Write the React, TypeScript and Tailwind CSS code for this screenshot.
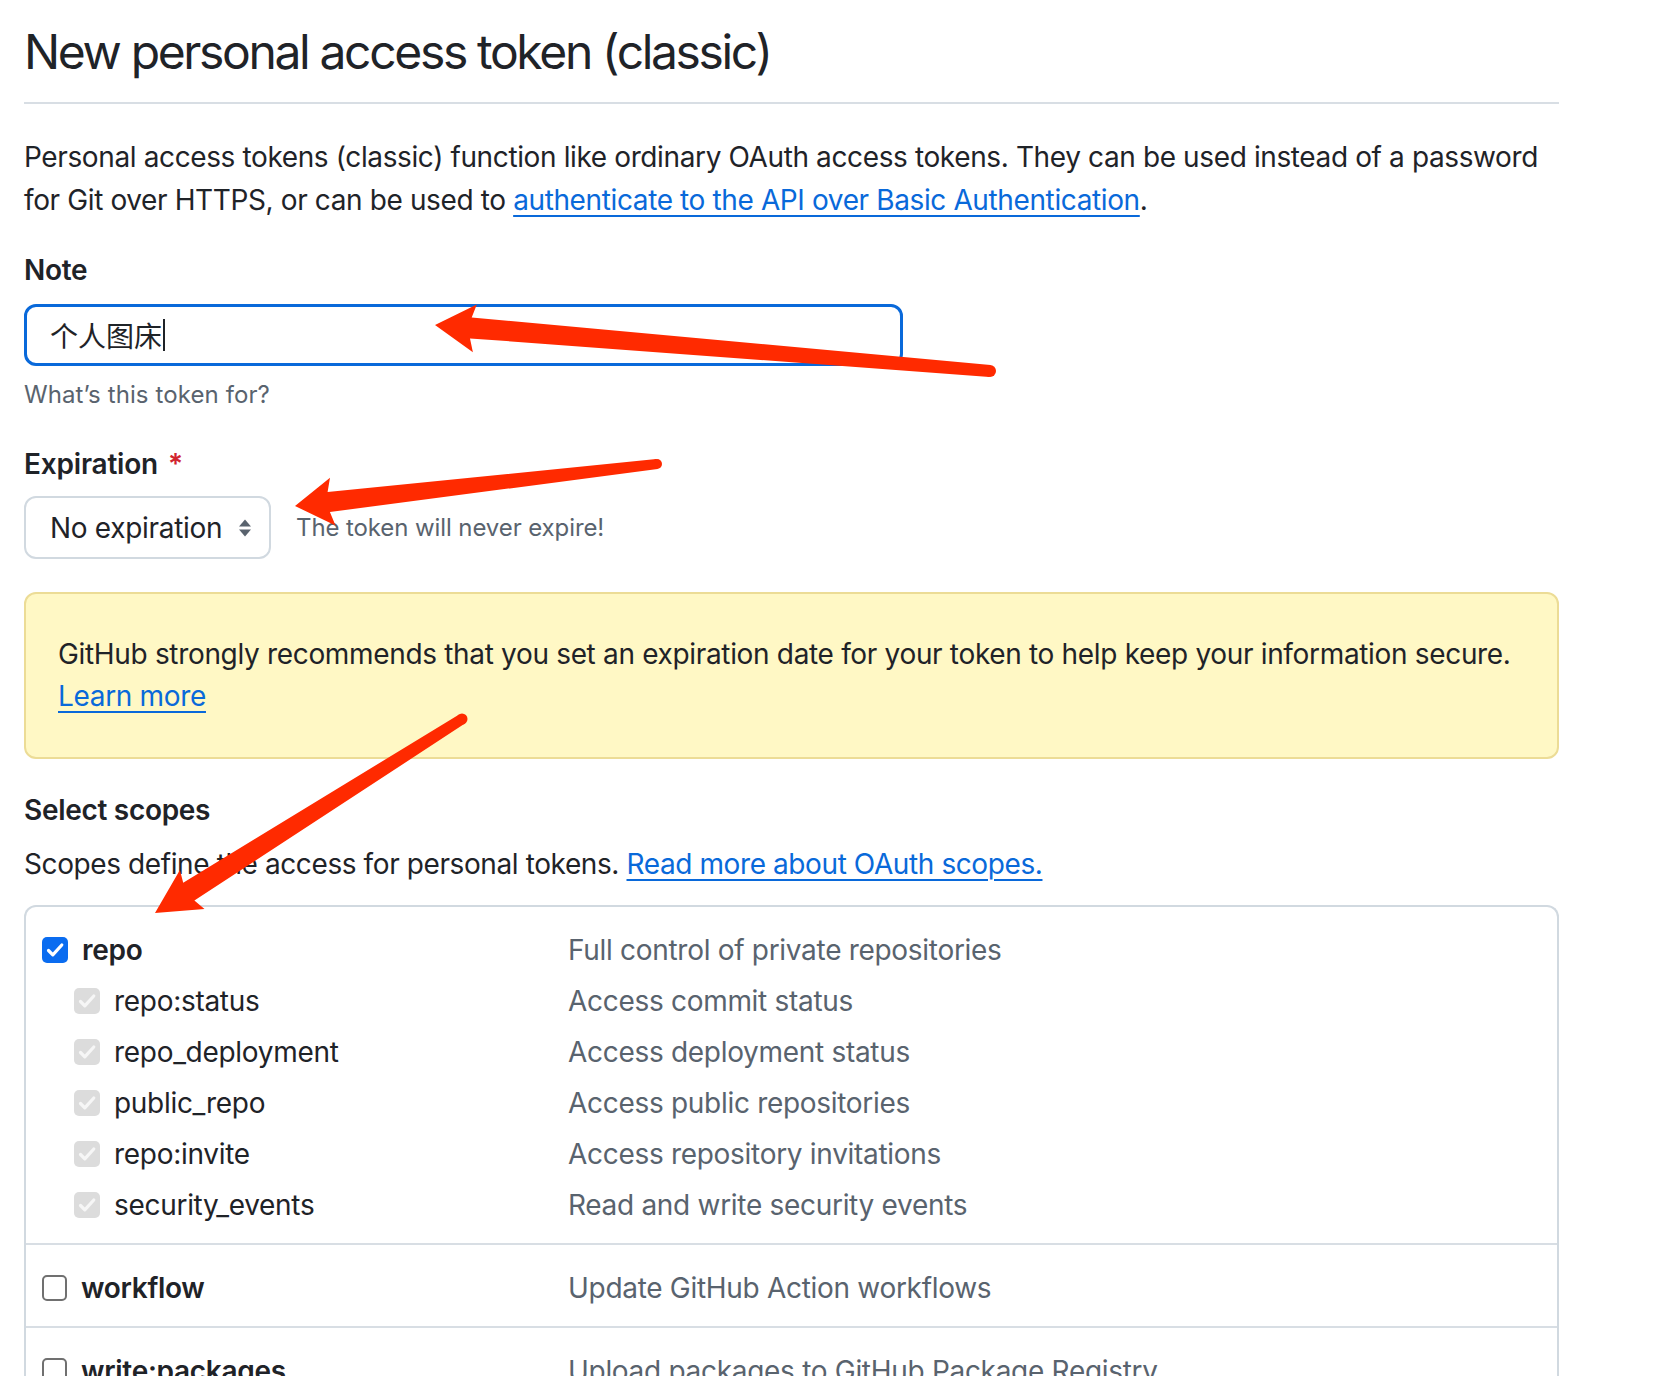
import React from "react";

type Pt = { x: number; y: number };

function Arrow({
  tail,
  tip,
  headLen,
  headHalf,
  shaftHead,
  shaftTail,
}: {
  tail: Pt;
  tip: Pt;
  headLen: number;
  headHalf: number;
  shaftHead: number;
  shaftTail: number;
}) {
  const dx = tip.x - tail.x;
  const dy = tip.y - tail.y;
  const L = Math.hypot(dx, dy);
  const ux = dx / L;
  const uy = dy / L;
  const px = -uy;
  const py = ux;
  const base = { x: tip.x - ux * headLen, y: tip.y - uy * headLen };
  const notch = { x: tip.x - ux * (headLen - 4), y: tip.y - uy * (headLen - 4) };
  const pts: Pt[] = [
    tip,
    { x: base.x + px * headHalf, y: base.y + py * headHalf },
    { x: notch.x + px * shaftHead, y: notch.y + py * shaftHead },
    { x: tail.x + px * shaftTail, y: tail.y + py * shaftTail },
    { x: tail.x - px * shaftTail, y: tail.y - py * shaftTail },
    { x: notch.x - px * shaftHead, y: notch.y - py * shaftHead },
    { x: base.x - px * headHalf, y: base.y - py * headHalf },
  ];
  return (
    <g fill="#ff2a00">
      <polygon points={pts.map((p) => `${p.x.toFixed(1)},${p.y.toFixed(1)}`).join(" ")} />
      <circle cx={tail.x} cy={tail.y} r={shaftTail} />
    </g>
  );
}

function CheckMark({ color = "#ffffff" }: { color?: string }) {
  return (
    <svg width="26" height="26" viewBox="0 0 26 26" fill="none">
      <path d="M6.5 13.5l4.3 4.3L19.8 8" stroke={color} strokeWidth="3.2" strokeLinecap="round" strokeLinejoin="round" />
    </svg>
  );
}

function Box({ kind }: { kind: "checked" | "disabled" | "empty" }) {
  if (kind === "checked")
    return (
      <span className="flex h-[26px] w-[26px] shrink-0 items-center justify-center rounded-[5px] bg-[#0a6cf0]">
        <CheckMark />
      </span>
    );
  if (kind === "disabled")
    return (
      <span className="flex h-[26px] w-[26px] shrink-0 items-center justify-center rounded-[5px] bg-[#dcdcdc]">
        <CheckMark color="#f6f6f6" />
      </span>
    );
  return <span className="block h-[26px] w-[25px] shrink-0 rounded-[5px] border-2 border-[#707070] bg-white" />;
}

function ScopeRow({
  name,
  desc,
  kind,
  sub,
}: {
  name: string;
  desc: string;
  kind: "checked" | "disabled" | "empty";
  sub?: boolean;
}) {
  return (
    <div className="flex h-[51px] items-center">
      <div className={`flex w-[526px] shrink-0 items-center ${sub ? "pl-[32px]" : ""}`}>
        <Box kind={kind} />
        <span className={`ml-[14px] text-[#1f2328] ${sub ? "font-normal" : "font-semibold"}`}>{name}</span>
      </div>
      <span className="whitespace-nowrap text-[#59636e]">{desc}</span>
    </div>
  );
}

export default function App() {
  return (
    <div
      className="relative h-[1376px] w-[1666px] overflow-hidden bg-white text-[#1f2328]"
      style={{ fontFamily: 'Inter, "Noto Sans CJK SC", sans-serif' }}
    >
      <div className="ml-[24px] w-[1535px]">
        <h1 className="border-b-2 border-[#d8dee4] pb-[20px] pt-[22px] text-[48px] font-normal leading-[60px] tracking-[-2.35px] whitespace-nowrap">
          New personal access token (classic)
        </h1>

        <p className="mt-[32px] whitespace-nowrap text-[28px] leading-[43px] tracking-[-0.38px]">
          Personal access tokens (classic) function like ordinary OAuth access tokens. They can be used instead of a password
          <br />
          for Git over HTTPS, or can be used to{" "}
          <a className="text-[#0969da] underline decoration-2 underline-offset-[5px]">authenticate to the API over Basic Authentication</a>.
        </p>

        <div className="mt-[27px] text-[28px] font-semibold leading-[42px] tracking-[-0.3px]">Note</div>
        <div className="mt-[13px] flex h-[62px] w-[879px] items-center rounded-[12px] border-[3px] border-[#0969da] pl-[23px] text-[28px]">
          <span className="text-[#1f2328]" style={{ fontFamily: '"Noto Sans CJK SC", sans-serif' }}>
            个人图床
          </span>
          <span className="ml-[1px] block h-[32px] w-[2px] bg-[#1f2328]" />
        </div>
        <div className="mt-[11px] text-[24px] leading-[36px] tracking-[0.1px] text-[#59636e]">What’s this token for?</div>

        <div className="mt-[30px] flex items-center text-[28px] font-semibold leading-[42px] tracking-[-0.2px]">
          Expiration<span className="ml-[10px] text-[#d1242f]">*</span>
        </div>
        <div className="mt-[11px] flex items-center">
          <div className="flex h-[63px] w-[247px] items-center justify-between rounded-[12px] border-2 border-[#d1d9e0] pl-[24px] pr-[16px] text-[28px] tracking-[-0.3px]">
            <span>No expiration</span>
            <svg width="16" height="22" viewBox="0 0 16 22">
              <path d="M8 2.5L14 9.5H2Z" fill="#59636e" />
              <path d="M2 12.5H14L8 19.5Z" fill="#59636e" />
            </svg>
          </div>
          <span className="ml-[25px] text-[24px] tracking-[-0.1px] text-[#59636e]">The token will never expire!</span>
        </div>

        <div className="mt-[33px] rounded-[12px] border-2 border-[#ecdc96] bg-[#fff8c5] px-[32px] pb-[40px] pt-[39px] text-[28px] leading-[42px] tracking-[-0.33px] whitespace-nowrap">
          GitHub strongly recommends that you set an expiration date for your token to help keep your information secure.
          <br />
          <a className="text-[#0969da] underline decoration-2 underline-offset-[5px]">Learn more</a>
        </div>

        <div className="mt-[30px] text-[28px] font-semibold leading-[42px] tracking-[-0.3px]">Select scopes</div>
        <div className="mt-[12px] text-[28px] leading-[42px] tracking-[-0.4px] whitespace-nowrap">
          Scopes define the access for personal tokens.{" "}
          <a className="text-[#0969da] underline decoration-2 underline-offset-[5px]">Read more about OAuth scopes.</a>
        </div>

        <div className="mt-[20px] rounded-t-[12px] border-2 border-b-0 border-[#d1d9e0] text-[28px] tracking-[-0.3px]">
          <div className="pb-[13px] pl-[16px] pt-[17px]">
            <ScopeRow name="repo" desc="Full control of private repositories" kind="checked" />
            <ScopeRow sub name="repo:status" desc="Access commit status" kind="disabled" />
            <ScopeRow sub name="repo_deployment" desc="Access deployment status" kind="disabled" />
            <ScopeRow sub name="public_repo" desc="Access public repositories" kind="disabled" />
            <ScopeRow sub name="repo:invite" desc="Access repository invitations" kind="disabled" />
            <ScopeRow sub name="security_events" desc="Read and write security events" kind="disabled" />
          </div>
          <div className="border-t-2 border-[#d8dee4] pb-[13px] pl-[16px] pt-[17px]">
            <ScopeRow name="workflow" desc="Update GitHub Action workflows" kind="empty" />
          </div>
          <div className="border-t-2 border-[#d8dee4] pb-[13px] pl-[16px] pt-[17px]">
            <ScopeRow name="write:packages" desc="Upload packages to GitHub Package Registry" kind="empty" />
          </div>
        </div>
      </div>

      <svg className="pointer-events-none absolute left-0 top-0" width="1666" height="1376" viewBox="0 0 1666 1376">
        <Arrow tail={{ x: 990, y: 371 }} tip={{ x: 435, y: 325 }} headLen={40} headHalf={24} shaftHead={10.5} shaftTail={6} />
        <Arrow tail={{ x: 657, y: 464 }} tip={{ x: 295, y: 506 }} headLen={38} headHalf={24} shaftHead={10} shaftTail={5} />
        <Arrow tail={{ x: 462, y: 719 }} tip={{ x: 155, y: 913 }} headLen={44} headHalf={23} shaftHead={10.5} shaftTail={5.5} />
      </svg>
    </div>
  );
}
